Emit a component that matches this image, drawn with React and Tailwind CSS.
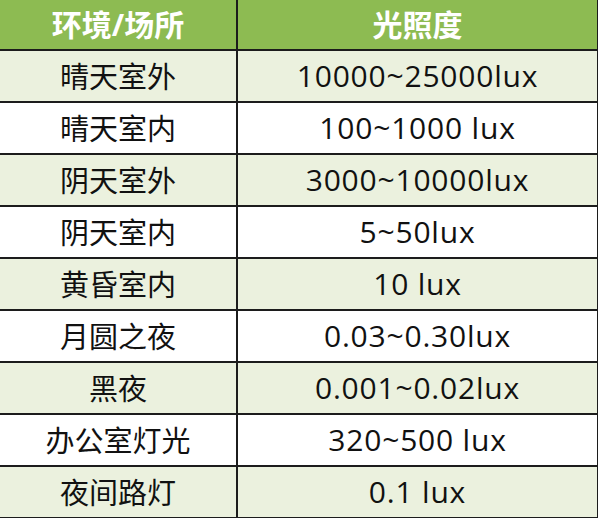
const ROWS = [
  ["晴天室外", "10000~25000lux"],
  ["晴天室内", "100~1000 lux"],
  ["阴天室外", "3000~10000lux"],
  ["阴天室内", "5~50lux"],
  ["黄昏室内", "10 lux"],
  ["月圆之夜", "0.03~0.30lux"],
  ["黑夜", "0.001~0.02lux"],
  ["办公室灯光", "320~500 lux"],
  ["夜间路灯", "0.1 lux"],
];

export default function App() {
  return (
    <div
      className="w-[600px] h-[518px] overflow-hidden bg-white text-[#111]"
      style={{ fontFamily: '"Open Sans", "Noto Sans CJK SC", sans-serif' }}
    >
      <div className="grid grid-cols-[238px_360px]">
        <div className="h-[51px] bg-[#8dbb52] border-b-2 border-r-2 border-[#1c1c1c] flex items-center justify-center text-white font-bold text-[30px] leading-none">
          环境/场所
        </div>
        <div className="h-[51px] bg-[#8dbb52] border-b-2 border-r border-[#1c1c1c] flex items-center justify-center text-white font-bold text-[30px] leading-none">
          光照度
        </div>
        {ROWS.map(([place, lux], i) => {
          const bg = i % 2 === 0 ? "bg-[#ebf1de]" : "bg-white";
          return [
            <div
              key={place}
              className={`h-[52px] ${bg} border-b-2 border-r-2 border-[#1c1c1c] flex items-center justify-center text-[29px] leading-none`}
            >
              {place}
            </div>,
            <div
              key={lux}
              className={`h-[52px] ${bg} border-b-2 border-r border-[#1c1c1c] flex items-center justify-center text-[30px] tracking-[0.8px] leading-none`}
            >
              {lux}
            </div>,
          ];
        })}
      </div>
    </div>
  );
}
